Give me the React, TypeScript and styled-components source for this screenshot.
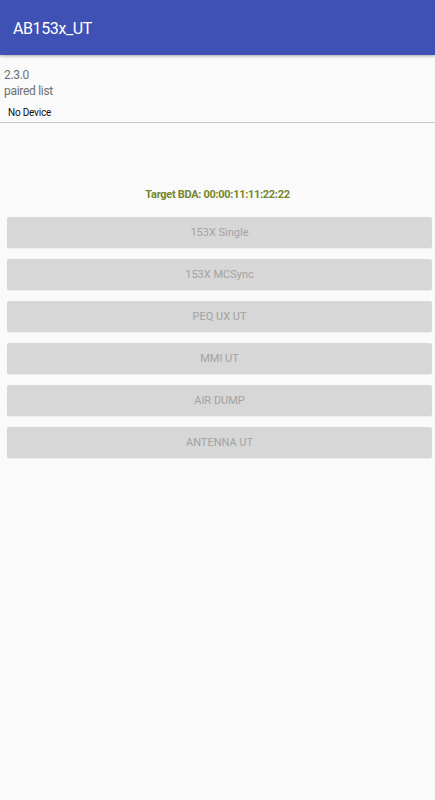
import React from "react";
import styled, { createGlobalStyle } from "styled-components";

const Global = createGlobalStyle`
  html, body { margin: 0; padding: 0; background: #fafafa; }
  body { font-family: Roboto, "Noto Sans", sans-serif; }
`;

const Screen = styled.div`
  width: 435px;
  min-height: 800px;
  background: #fafafa;
  display: flex;
  flex-direction: column;
`;

const AppBar = styled.header`
  height: 55px;
  background: #3f51b5;
  display: flex;
  align-items: center;
  padding: 2px 0 0 13px;
  box-sizing: border-box;
  box-shadow: 0 1px 3px rgba(0, 0, 0, 0.35);
  position: relative;
  z-index: 1;
`;

const Title = styled.h1`
  margin: 0;
  color: #ffffff;
  font-size: 16px;
  font-weight: 400;
  letter-spacing: -0.4px;
`;

const Info = styled.section`
  display: flex;
  flex-direction: column;
  padding: 12px 0 0 4px;
`;

const Meta = styled.div`
  color: #6f6f6f;
  font-size: 12px;
  line-height: 16px;
  letter-spacing: -0.3px;
`;

const DeviceRow = styled.div`
  padding: 7px 0 2px 8px;
  color: #111;
  font-size: 10px;
  line-height: 14px;
  letter-spacing: -0.2px;
  border-bottom: 1px solid #c8c8c8;
`;

const Target = styled.div`
  margin-top: 65px;
  text-align: center;
  color: #76862a;
  font-size: 11px;
  font-weight: 700;
  line-height: 14px;
  letter-spacing: -0.3px;
`;

const ButtonList = styled.div`
  display: flex;
  flex-direction: column;
  gap: 11px;
  padding: 15px 3px 0 7px;
`;

const ActionButton = styled.button`
  height: 31px;
  border: none;
  border-radius: 2px;
  background: #d6d7d6;
  color: #a3a3a3;
  font-family: Roboto, "Noto Sans", sans-serif;
  font-size: 11px;
  padding: 0;
  box-shadow: 0 1px 1px rgba(0, 0, 0, 0.06);
`;

const buttons = ["153X Single", "153X MCSync", "PEQ UX UT", "MMI UT", "AIR DUMP", "ANTENNA UT"];

export default function App() {
  return (
    <Screen>
      <Global />
      <AppBar>
        <Title>AB153x_UT</Title>
      </AppBar>
      <Info>
        <Meta>2.3.0</Meta>
        <Meta>paired list</Meta>
      </Info>
      <DeviceRow>No Device</DeviceRow>
      <Target>Target BDA: 00:00:11:11:22:22</Target>
      <ButtonList>
        {buttons.map((b) => (
          <ActionButton key={b} disabled>
            {b}
          </ActionButton>
        ))}
      </ButtonList>
    </Screen>
  );
}
